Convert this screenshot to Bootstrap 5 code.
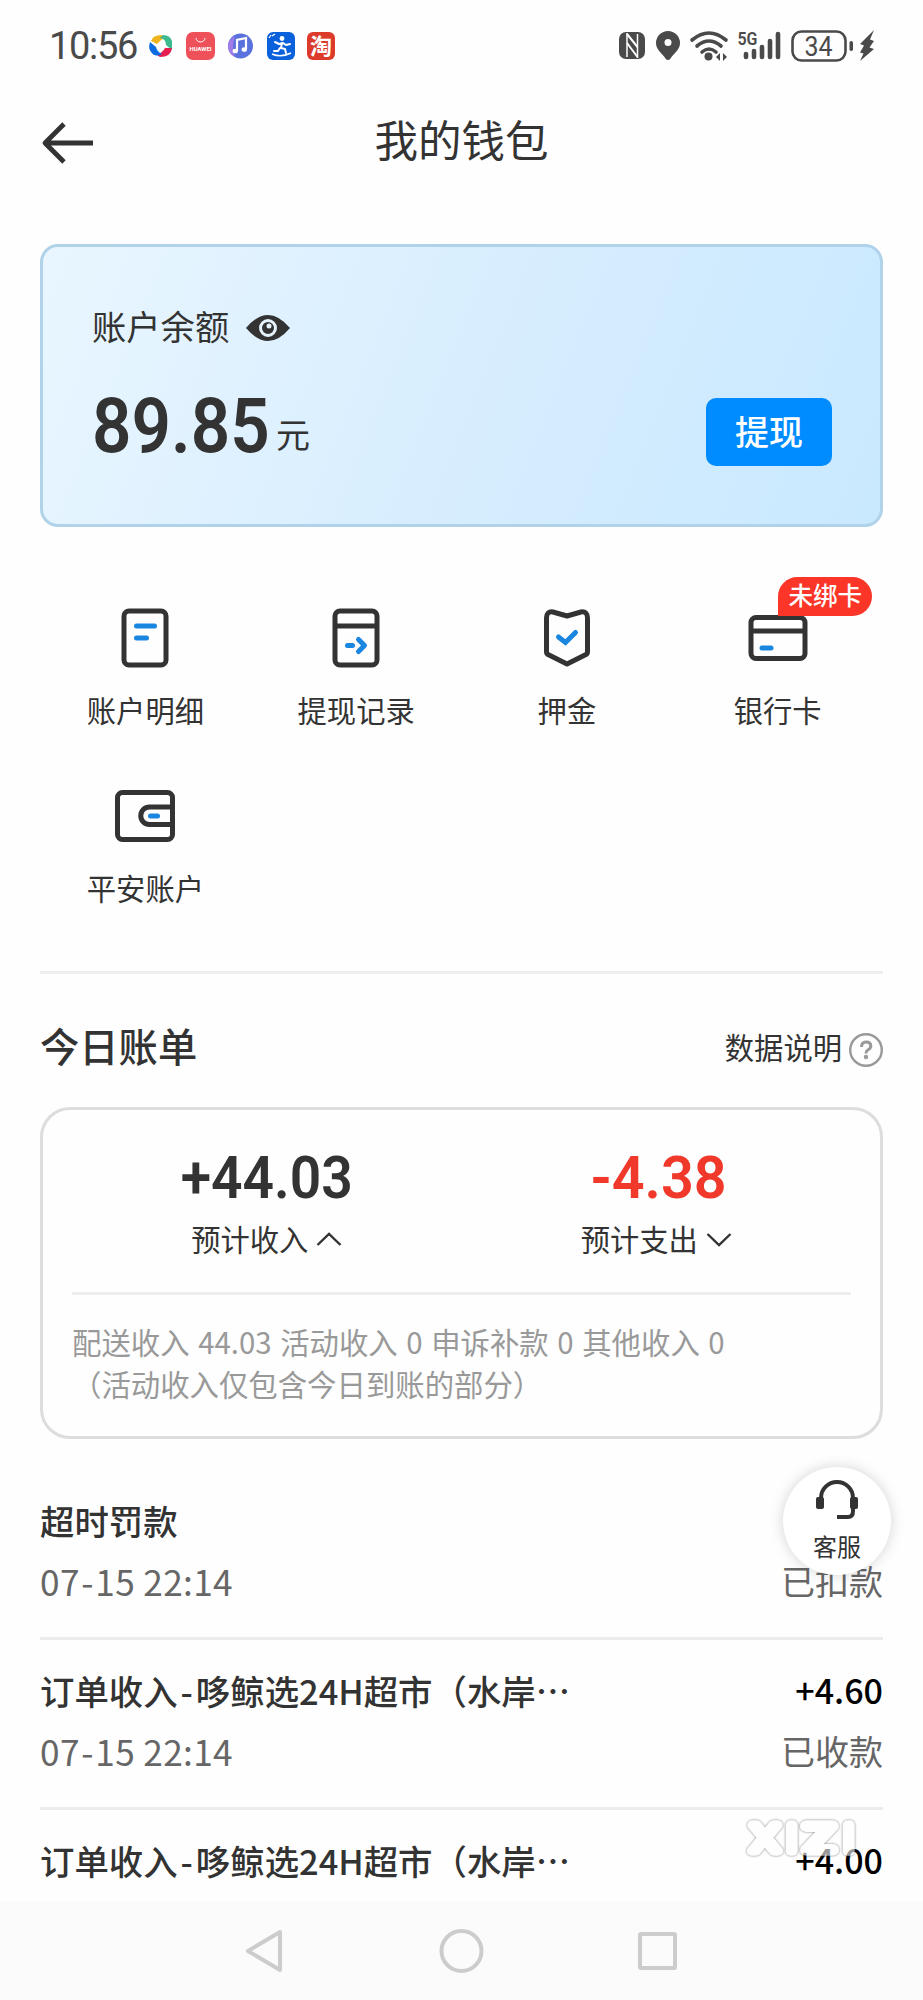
<!DOCTYPE html>
<html lang="zh-CN">
<head>
<meta charset="utf-8">
<meta name="viewport" content="width=device-width, initial-scale=1">
<title>我的钱包</title>
<link href="https://cdn.jsdelivr.net/npm/bootstrap@5.3.0/dist/css/bootstrap.min.css" rel="stylesheet">
<style>
  body { font-family: "Noto Sans CJK SC", sans-serif; color: #333; background: #fefefe; height: 2000px; overflow: hidden; }
  svg { display: block; flex: none; overflow: visible; }
  .num { font-family: Roboto, "Noto Sans CJK SC", sans-serif; white-space: nowrap; line-height: 1; }
  .page { width: 923px; height: 2000px; overflow: hidden; }
  .status-bar { height: 92px; padding: 0 47px 0 49px; color: #4a4a4a; }
  .clock { font-size: 38px; letter-spacing: -1.3px; font-weight: 400; width: 99px; }
  .title-bar { height: 152px; padding: 0 40px 50px; }
  .title-bar h1 { font-size: 43.5px; font-weight: 400; line-height: 60px; margin-top: -9px; }
  .side { width: 60px; }
  .balance { height: 283px; margin: 0 40px; padding: 0 48px 0 49px; border: 3px solid #b0d3ea; border-radius: 18px; background: linear-gradient(112deg, #e9f6ff 0%, #d6edfe 55%, #c9e9ff 100%); }
  .balance-label { font-size: 34.3px; line-height: 50px; margin-top: 53px; }
  .balance-label svg { margin: 6px 0 0 17px; }
  .balance-row { height: 68px; margin-top: 48px; }
  .balance-value { font-size: 76px; font-weight: 600; letter-spacing: 0; transform: scaleX(.91); transform-origin: left; width: 184px; margin-top: -13px; }
  .unit { font-size: 34px; line-height: 50px; margin-top: 4px; }
  .btn-cash { width: 126px; height: 68px; font-size: 34px; font-weight: 500; line-height: 62px; padding: 0 0 3px; background: #008cff; color: #fff; border: 0; border-radius: 10px; }
  .tools { margin: 59px 40px 0; height: 388px; border-bottom: 3px solid #eee; align-content: flex-start; }
  .tool { height: 178px; padding-top: 20px; }
  .tool span.name { font-size: 29.3px; line-height: 44px; margin-top: 17px; }
  .tool svg { width: 64px; height: 64px; }
  .tag { left: 106px; top: -9px; width: 94px; height: 39px; border-radius: 20px 20px 20px 0; background: #fb3528; color: #fff; font-size: 24.500px; line-height: 36px; font-weight: 500; }
  .bill-head { height: 133px; padding: 0 40px; }
  .bill-head h2 { font-size: 39.3px; font-weight: 500; line-height: 56px; padding-top: 9px; }
  .bill-help { font-size: 29.3px; padding-top: 13px; }
  .bill-help svg { margin: 6px 0 0 7px; }
  .bill { height: 332px; margin: 0 40px; padding: 0 29px; border: 3px solid #ddd; border-radius: 30px; }
  .bill-cols { height: 185px; border-bottom: 3px solid #eee; padding-top: 38px; }
  .bill-num { font-size: 60px; font-weight: 600; transform: scaleX(.92); }
  .bill-out { color: #f0392b; transform: scaleX(.96) translateX(2px); }
  .bill-label { font-size: 29.3px; line-height: 44px; margin-top: 8px; }
  .bill-note { font-size: 29.4px; line-height: 42px; color: #999; padding-top: 25px; white-space: nowrap; word-spacing: 2px; }
  .records { margin: 31px 40px 0; height: 431px; overflow: hidden; }
  .rec { height: 170px; border-bottom: 3px solid #ececec; padding-top: 25px; }
  .rec-title { font-size: 34.4px; line-height: 50px; font-weight: 500; white-space: nowrap; }
  .dash { margin: 0 3px; }
  .rec-sum { font-size: 34px; line-height: 50px; font-weight: 500; color: #000; }
  .rec-sub { font-size: 34px; line-height: 50px; margin-top: 11px; color: #666; }
  .when { font-size: 35.2px; letter-spacing: .35px; }
  .when .dash { margin: 0 1.5px; }
  .service { left: 783px; top: 1467px; width: 108px; height: 108px; border-radius: 50%; background: #fff; box-shadow: 0 0 14px rgba(0,0,0,.17); font-size: 24px; line-height: 34px; padding-top: 14px; }
  .mark-layer { left: 740px; top: 1812px; opacity: .6; filter: drop-shadow(0 0 .8px #222); }
  .nav-keys { height: 99px; background: #fbfbfb; }
</style>
</head>
<body>
<div class="page position-relative d-flex flex-column">
  <div class="status-bar d-flex align-items-center justify-content-between">
    <div class="d-flex align-items-center">
      <div class="num clock">10:56</div>
      <svg width="190" height="30" viewBox="0 0 190 30">
        <path d="M3 10Q5 4 13 4L18 6Q12 9 9 13Z" fill="#efb51f"/>
        <path d="M15 4Q22 4 24 10V19L18 14Q18 8 12 7Z" fill="#3dba8d"/>
        <path d="M24 17Q23 26 12 26L9 24Q15 21 17 17Z" fill="#e61e50"/>
        <path d="M2 11L8 16Q9 21 14 23Q7 27 3 21Q0 17 2 11Z" fill="#0a6ce0"/>
        <rect x="38" y="1" width="29" height="28" rx="7" fill="#ee5159"/>
        <path d="M48 7a4.500 4 0 0 0 9 0" fill="none" stroke="#fff" stroke-width="1"/>
        <text x="41.500" y="20" font-family="Roboto" font-size="6" font-weight="700" fill="#fff" textLength="22" lengthAdjust="spacingAndGlyphs">HUAWEI</text>
        <circle cx="92.500" cy="15" r="12.500" fill="#5a72dd"/><path d="M81 10a12.500 12.500 0 0 0 6 16Q83 18 87 5Z" fill="#a17be8"/>
        <path d="M89 20V9l9-2v11" fill="none" stroke="#fff" stroke-width="2.200"/><ellipse cx="87.300" cy="20" rx="2.700" ry="2.300" fill="#fff"/><ellipse cx="96.300" cy="18.500" rx="2.700" ry="2.300" fill="#fff"/>
        <rect x="119" y="1" width="28" height="28" rx="6" fill="#0b60dc"/>
        <circle cx="134" cy="7.500" r="2.400" fill="#fff"/><path d="M127 11l4 2 4-1 3 2 4-1M134 12l-1 5 4 1 1 4M132 17l-2 3h-4" fill="none" stroke="#fff" stroke-width="2" stroke-linecap="round" stroke-linejoin="round"/><path d="M124 23q9 4 19-1" fill="none" stroke="#fff" stroke-width="1.600"/><path d="M121 7l2-3M124 5l3-2" stroke="#fff" stroke-width="1.300"/>
        <rect x="159" y="1" width="28" height="28" rx="6" fill="#dc3b2c"/>
        <text x="162" y="23" font-family="Noto Sans CJK SC" font-size="22" font-weight="700" fill="#fff">淘</text>
      </svg>
    </div>
    <svg width="257" height="32" viewBox="0 0 257 32" fill="#4a4a4a">
      <rect x="0" y="2" width="26" height="27" rx="7"/><path d="M8 3L8 27M18.500 4V28" stroke="#fefefe" stroke-width="1.500"/><path d="M8 4L18.500 17M8 13L18.500 27" stroke="#fefefe" stroke-width="2"/>
      <path d="M49 1a12 12 0 0 1 12 12c0 7-6 10-9.500 15.500q-2.500 3-5 0C43 23 37 20 37 13A12 12 0 0 1 49 1Z"/><circle cx="49" cy="12.500" r="3.500" fill="#fefefe"/>
      <g fill="none" stroke="#4a4a4a" stroke-width="3.600" stroke-linecap="round"><path d="M73 10q17-14 34 0M78 16q12-10 24 0M83 22q7-6 14 0"/></g>
      <circle cx="89.500" cy="26.500" r="4"/><path d="M97 27l4-4v8ZM108 27l-4-4v8Z"/>
      <text x="118.500" y="15" font-family="Roboto" font-size="18" font-weight="600" textLength="20" lengthAdjust="spacingAndGlyphs">5G</text>
      <g stroke="#4a4a4a" stroke-width="4.600" stroke-linecap="round"><path d="M127 24v3M135 21v6M143 17v10M151 11v16M159 4v23"/></g>
      <rect x="173.500" y="1.500" width="53" height="29" rx="9" fill="none" stroke="#4a4a4a" stroke-width="2.600"/>
      <text x="185.500" y="25.500" font-family="Roboto" font-size="27" textLength="28" lengthAdjust="spacingAndGlyphs">34</text>
      <rect x="230.500" y="11" width="3.500" height="10" rx="1.700"/>
      <path d="M255 0L241 14l4 1.500-4 7 3.500 1L241 31l14-12-4.500-1.500L255 11l-4-1.500Z"/>
    </svg>
  </div>

  <div class="title-bar d-flex align-items-center justify-content-between">
    <div class="side"><svg width="56" height="42" viewBox="0 0 56 42"><path d="M24 2L5 21L24 40M5 21H53" fill="none" stroke="#333" stroke-width="4.800" stroke-linejoin="round"/></svg></div>
    <h1 class="mb-0">我的钱包</h1>
    <div class="side"></div>
  </div>

  <div class="balance">
    <div class="balance-label d-flex align-items-center">账户余额
      <svg width="44" height="28" viewBox="0 0 44 28"><path d="M0 14Q22-12 44 14Q22 40 0 14Z" fill="#333"/><circle cx="22" cy="14" r="7.500" fill="none" stroke="#e4f3fe" stroke-width="3"/><circle cx="23" cy="12" r="2.500" fill="#e4f3fe"/></svg>
    </div>
    <div class="balance-row d-flex align-items-center justify-content-between">
      <div class="d-flex align-items-center"><div class="num balance-value">89.85</div><div class="unit">元</div></div>
      <button class="btn btn-cash">提现</button>
    </div>
  </div>

  <div class="tools row g-0">
    <div class="col-3 tool d-flex flex-column align-items-center">
      <svg viewBox="0 0 64 64" fill="none" stroke="#333" stroke-width="5"><rect x="11" y="5" width="42" height="54" rx="5"/><path d="M23.500 20h18M23.500 32h10" stroke="#1a86e0" stroke-linecap="round"/></svg>
      <span class="name">账户明细</span>
    </div>
    <div class="col-3 tool d-flex flex-column align-items-center">
      <svg viewBox="0 0 64 64" fill="none" stroke="#333" stroke-width="5"><rect x="11" y="5" width="42" height="54" rx="5"/><path d="M11 20h42"/><path d="M23.500 39.500h5M34.500 33.500l6 6-6 6" stroke="#1a86e0" stroke-linecap="round" stroke-linejoin="round"/></svg>
      <span class="name">提现记录</span>
    </div>
    <div class="col-3 tool d-flex flex-column align-items-center">
      <svg viewBox="0 0 64 64" fill="none" stroke="#333" stroke-width="5"><path d="M18 6L32 10L46 6Q52.500 5 52.500 12V46Q52.500 48 50 49L32 58L14 49Q11.500 48 11.500 46V12Q11.500 5 18 6Z" stroke-linejoin="round"/><path d="M23.500 31l7 5.500 10-10" stroke="#1a86e0" stroke-linecap="round"/></svg>
      <span class="name">押金</span>
    </div>
    <div class="col-3 tool d-flex flex-column align-items-center position-relative">
      <svg viewBox="0 0 64 64" fill="none" stroke="#333" stroke-width="5"><rect x="5" y="11.500" width="54" height="41" rx="5"/><path d="M5 25h54"/><path d="M16 42h9" stroke="#1a86e0" stroke-linecap="round"/></svg>
      <span class="tag position-absolute text-center">未绑卡</span>
      <span class="name">银行卡</span>
    </div>
    <div class="col-3 tool d-flex flex-column align-items-center">
      <svg viewBox="0 0 64 64" fill="none" stroke="#333" stroke-width="5"><rect x="4.500" y="8.500" width="55" height="47" rx="5"/><path d="M59 23H36.500a8.700 8.700 0 0 0 0 17.500H59"/><path d="M37.500 32h7" stroke="#1a86e0" stroke-linecap="round"/></svg>
      <span class="name">平安账户</span>
    </div>
  </div>

  <div class="bill-head d-flex align-items-center justify-content-between">
    <h2 class="mb-0">今日账单</h2>
    <div class="bill-help d-flex align-items-center">数据说明
      <svg width="34" height="34" viewBox="0 0 34 34" fill="none" stroke="#999" stroke-width="2.400"><circle cx="17" cy="17" r="15.800"/><path d="M12.500 14q0-5 4.500-5 4.800 0 4.800 4 0 2.500-3 4-1.800 1-1.800 3.500" stroke-width="3"/><circle cx="17" cy="24" r="1" /></svg>
    </div>
  </div>

  <div class="bill">
    <div class="bill-cols row g-0 text-center">
      <div class="col-6"><div class="num bill-num">+44.03</div>
        <div class="bill-label d-flex justify-content-center align-items-center">预计收入<svg class="ms-2" width="26" height="16" viewBox="0 0 26 16"><path d="M1.500 15L13 4L24.500 15" fill="none" stroke="#333" stroke-width="2.400"/></svg></div></div>
      <div class="col-6"><div class="num bill-num bill-out">-4.38</div>
        <div class="bill-label d-flex justify-content-center align-items-center">预计支出<svg class="ms-2" width="26" height="16" viewBox="0 0 26 16"><path d="M1.500 4L13 15L24.500 4" fill="none" stroke="#333" stroke-width="2.400"/></svg></div></div>
    </div>
    <div class="bill-note">配送收入 44.03 活动收入 0 申诉补款 0 其他收入 0<br>（活动收入仅包含今日到账的部分）</div>
  </div>

  <div class="records">
    <div class="rec">
      <div class="rec-title">超时罚款</div>
      <div class="rec-sub d-flex justify-content-between"><span class="when">07<span class="dash">-</span>15 22:14</span><span>已扣款</span></div>
    </div>
    <div class="rec">
      <div class="d-flex justify-content-between"><span class="rec-title">订单收入<span class="dash">-</span>哆鲸选24H超市（水岸⋯</span><span class="rec-sum">+4.60</span></div>
      <div class="rec-sub d-flex justify-content-between"><span class="when">07<span class="dash">-</span>15 22:14</span><span>已收款</span></div>
    </div>
    <div class="rec">
      <div class="d-flex justify-content-between"><span class="rec-title">订单收入<span class="dash">-</span>哆鲸选24H超市（水岸⋯</span><span class="rec-sum">+4.00</span></div>
    </div>
  </div>

  <div class="nav-keys">
    <svg width="923" height="99" viewBox="0 0 923 99" fill="none" stroke="#ccc" stroke-width="4" stroke-linejoin="round"><path d="M280 31V69L248 50Z"/><circle cx="461.500" cy="50" r="20"/><rect x="640" y="33" width="35" height="34" rx="1"/></svg>
  </div>

  <div class="service position-absolute d-flex flex-column align-items-center">
    <svg width="44" height="40" viewBox="0 0 44 40"><path d="M6 18v-1a16 16 0 0 1 32 0v13q0 6-5 6H22" fill="none" stroke="#333" stroke-width="4"/><rect x="1" y="16" width="8" height="12" rx="2" fill="#333"/><rect x="35" y="16" width="8" height="12" rx="2" fill="#333"/></svg>
    <div class="mt-2">客服</div>
  </div>

  <svg class="mark-layer position-absolute" width="120" height="54" viewBox="0 0 120 54" font-family="Inter, Roboto, sans-serif" font-size="36" font-weight="300" fill="#fff" stroke="#fff" stroke-width="9.500" stroke-linejoin="round">
    <text x="11" y="39" textLength="28" lengthAdjust="spacingAndGlyphs">X</text>
    <text x="47" y="39">I</text>
    <text x="63.500" y="39" textLength="32" lengthAdjust="spacingAndGlyphs">Z</text>
    <text x="104" y="39">I</text>
  </svg>
</div>
<script src="https://cdn.jsdelivr.net/npm/bootstrap@5.3.0/dist/js/bootstrap.bundle.min.js"></script>
</body>
</html>
